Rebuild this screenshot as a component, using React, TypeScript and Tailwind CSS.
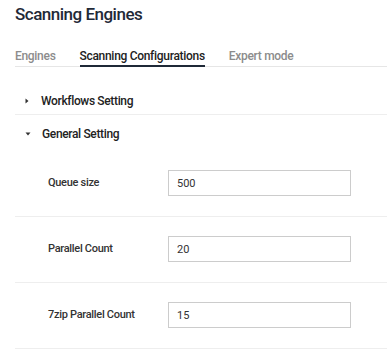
const ROWS = [
  { label: "Queue size", value: "500" },
  { label: "Parallel Count", value: "20" },
  { label: "7zip Parallel Count", value: "15" },
];

function Caret({ open }: { open: boolean }) {
  return open ? (
    <svg width="6" height="4" viewBox="0 0 6 4" className="mr-[11px]">
      <path d="M0.5 0.5h5L3 3.5z" fill="#333" />
    </svg>
  ) : (
    <svg width="4" height="6" viewBox="0 0 4 6" className="mr-[12px]">
      <path d="M0.5 0.5v5L3.5 3z" fill="#333" />
    </svg>
  );
}

export default function App() {
  return (
    <div className="min-h-[362px] bg-white pl-[15px] font-['Roboto',sans-serif] text-[#333]">
      <h1 className="mt-[2px] text-[17px] leading-[24px] font-medium tracking-[-0.5px] text-[#1f2937]">
        Scanning Engines
      </h1>

      {/* Tabs */}
      <div className="mt-[22px] flex gap-6 border-b border-[#e6e6e6] text-[12px] leading-[16px] font-medium tracking-[-0.3px]">
        <div className="-mb-px pb-[3px] text-[#8c8c8c]">Engines</div>
        <div className="-mb-px border-b-2 border-[#1f2937] pb-[1px] text-[#222]">
          Scanning Configurations
        </div>
        <div className="-mb-px pb-[3px] text-[#8c8c8c]">Expert mode</div>
      </div>

      {/* Workflows */}
      <div className="flex items-center border-b border-[#eeeeee] pt-[26px] pb-[5px] pl-[10px] text-[12px] leading-[16px] font-medium tracking-[-0.35px] text-[#222]">
        <Caret open={false} />
        Workflows Setting
      </div>

      {/* General */}
      <div className="flex items-center pt-[11px] pb-[9px] pl-[10px] text-[12px] leading-[16px] font-medium tracking-[-0.35px] text-[#222]">
        <Caret open />
        General Setting
      </div>

      {ROWS.map((r) => (
        <div
          key={r.label}
          className="flex items-center border-b border-[#eeeeee] pt-[19px] pb-[20px] pl-[33px]"
        >
          <div className="w-[120px] text-[11px] font-medium tracking-[-0.3px] text-[#333]">
            {r.label}
          </div>
          <input
            readOnly
            value={r.value}
            className="h-[26px] w-[183px] border border-[#cccccc] px-[8px] text-[11px] text-[#333] outline-none"
          />
        </div>
      ))}
    </div>
  );
}
